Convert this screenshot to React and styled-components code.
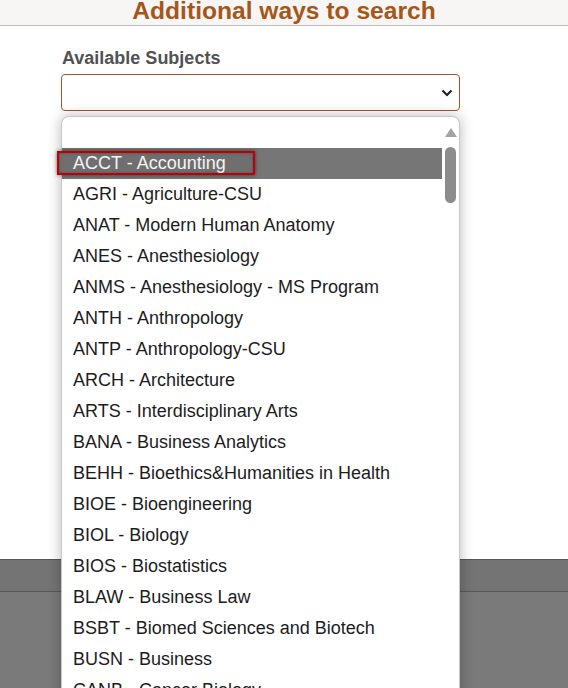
import styled, { createGlobalStyle } from "styled-components";

const subjects = [
  "ACCT - Accounting",
  "AGRI - Agriculture-CSU",
  "ANAT - Modern Human Anatomy",
  "ANES - Anesthesiology",
  "ANMS - Anesthesiology - MS Program",
  "ANTH - Anthropology",
  "ANTP - Anthropology-CSU",
  "ARCH - Architecture",
  "ARTS - Interdisciplinary Arts",
  "BANA - Business Analytics",
  "BEHH - Bioethics&Humanities in Health",
  "BIOE - Bioengineering",
  "BIOL - Biology",
  "BIOS - Biostatistics",
  "BLAW - Business Law",
  "BSBT - Biomed Sciences and Biotech",
  "BUSN - Business",
  "CANB - Cancer Biology",
];

export default function App() {
  return (
    <>
      <GlobalStyle />
      <Page>
        <Header>
          <Title>Additional ways to search</Title>
        </Header>
        <Content>
          <Label>Available Subjects</Label>
          <SelectBox>
            <svg width="12" height="8" viewBox="0 0 12 8">
              <path d="M1.5 1.5 L6 6 L10.5 1.5" fill="none" stroke="#222" strokeWidth="2.2" />
            </svg>
          </SelectBox>
        </Content>
        <Footer>
          <FooterBand />
        </Footer>

        {/* open listbox popup, drawn over the page */}
        <ListBox>
          <Options>
            <Option />
            {subjects.map((s, i) => (
              <Option key={s} $selected={i === 0}>
                {i === 0 ? <FocusRing>{s}</FocusRing> : s}
              </Option>
            ))}
          </Options>
          <ScrollTrack>
            <UpArrow />
            <Thumb />
          </ScrollTrack>
        </ListBox>
      </Page>
    </>
  );
}

const GlobalStyle = createGlobalStyle`
  body {
    margin: 0;
    font-family: "Liberation Sans", Arial, sans-serif;
    background: #fff;
  }
`;

const Page = styled.div`
  position: relative;
  height: 688px;
  overflow: hidden;
  display: flex;
  flex-direction: column;
`;

const Header = styled.header`
  height: 25px;
  background: #f7f6f4;
  border-bottom: 1px solid #bdbdbd;
  overflow: hidden;
  display: flex;
  justify-content: center;
  align-items: flex-end;
`;

const Title = styled.h1`
  margin: 0;
  font-size: 24.6px;
  font-weight: bold;
  color: #a5561a;
  line-height: 29px;
`;

const Content = styled.main`
  height: 533px;
  padding: 21px 0 0 61px;
  box-sizing: border-box;
  background: #fff;
`;

const Label = styled.div`
  font-size: 18px;
  font-weight: bold;
  color: #525252;
  line-height: 22px;
  padding-left: 1px;
  margin-bottom: 5px;
`;

const SelectBox = styled.div`
  width: 399px;
  height: 37px;
  box-sizing: border-box;
  border: 1px solid #a4532a;
  border-radius: 4px;
  display: flex;
  align-items: center;
  justify-content: flex-end;
  padding-right: 6px;
`;

const Footer = styled.footer`
  flex: 1;
  background: #7a7a7a;
  border-top: 1px solid #555;
`;

const FooterBand = styled.div`
  height: 31px;
  background: #747474;
  border-bottom: 1px solid #585858;
`;

const ListBox = styled.div`
  position: absolute;
  top: 116px;
  left: 61px;
  width: 399px;
  height: 620px;
  box-sizing: border-box;
  background: #fff;
  border: 1px solid #c8c8c8;
  border-radius: 8px 8px 0 0;
  box-shadow: 0 0 14px rgba(0, 0, 0, 0.28);
  display: flex;
`;

const Options = styled.ul`
  list-style: none;
  margin: 0;
  padding: 0;
  width: 380px;
`;

const Option = styled.li`
  height: 31px;
  line-height: 31px;
  padding-left: 11px;
  font-size: 18px;
  color: ${(p) => (p.$selected ? "#f4f4f4" : "#1c1c1c")};
  background: ${(p) => (p.$selected ? "#767676" : "transparent")};
  white-space: nowrap;
`;

const FocusRing = styled.span`
  display: inline-block;
  line-height: 20px;
  margin-left: -16px;
  padding: 0 27px 0 14px;
  border: 2px solid #c00000;
  box-shadow: 0 0 4px rgba(0, 0, 0, 0.55), inset 0 0 3px rgba(0, 0, 0, 0.3);
  background: #6f6f6f;
`;

const ScrollTrack = styled.div`
  flex: 1;
  display: flex;
  flex-direction: column;
  align-items: center;
  padding-top: 11px;
  gap: 10px;
`;

const UpArrow = styled.div`
  width: 0;
  height: 0;
  border-left: 6.5px solid transparent;
  border-right: 6.5px solid transparent;
  border-bottom: 9px solid #a3a3a3;
`;

const Thumb = styled.div`
  width: 11px;
  height: 56px;
  border-radius: 6px;
  background: #8c8c8c;
`;
